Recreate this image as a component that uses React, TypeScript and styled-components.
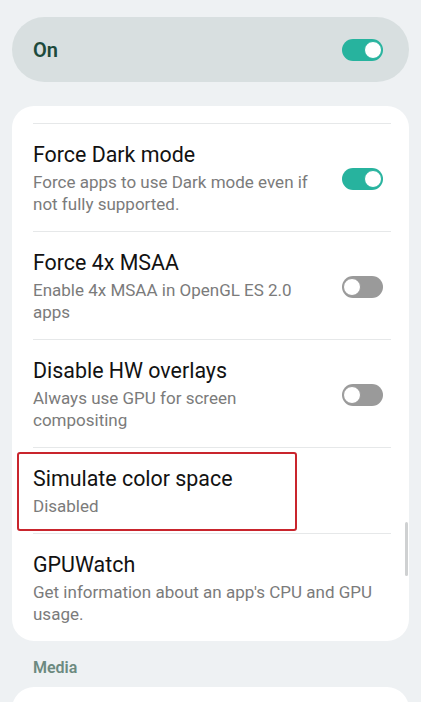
import React from "react";
import styled, { createGlobalStyle } from "styled-components";

const GlobalStyle = createGlobalStyle`
  html, body {
    margin: 0;
    padding: 0;
    background: #eef1f3;
  }
  body {
    font-family: Roboto, "Noto Sans", "Liberation Sans", sans-serif;
    -webkit-font-smoothing: antialiased;
  }
`;

interface IItem {
  title: string;
  summary?: string;
  toggle?: boolean;
  highlight?: boolean;
}

const items: IItem[] = [
  {
    title: "Force Dark mode",
    summary: "Force apps to use Dark mode even if not fully supported.",
    toggle: true,
  },
  {
    title: "Force 4x MSAA",
    summary: "Enable 4x MSAA in OpenGL ES 2.0 apps",
    toggle: false,
  },
  {
    title: "Disable HW overlays",
    summary: "Always use GPU for screen compositing",
    toggle: false,
  },
  { title: "Simulate color space", summary: "Disabled", highlight: true },
  {
    title: "GPUWatch",
    summary: "Get information about an app's CPU and GPU usage.",
  },
];

const Switch = ({ on }: { on: boolean }) => (
  <Track on={on}>
    <Knob on={on} />
  </Track>
);

const App = () => {
  return (
    <>
      <GlobalStyle />
      <Screen>
        <MasterBar>
          <MasterLabel>On</MasterLabel>
          <Switch on={true} />
        </MasterBar>

        <Card>
          <CutOff />
          {items.map((item) => (
            <React.Fragment key={item.title}>
              <Divider />
              <Row>
                {item.highlight && <Highlight />}
                <TextCol>
                  <Title>{item.title}</Title>
                  {item.summary && <Summary>{item.summary}</Summary>}
                </TextCol>
                {item.toggle !== undefined && <Switch on={item.toggle} />}
              </Row>
            </React.Fragment>
          ))}
          <ScrollThumb />
        </Card>

        <SectionLabel>Media</SectionLabel>
        <NextCard />
      </Screen>
    </>
  );
};

const Screen = styled.div`
  width: 421px;
  height: 702px;
  overflow: hidden;
  padding: 17px 12px 0;
  box-sizing: border-box;
  display: flex;
  flex-direction: column;
`;

const MasterBar = styled.div`
  height: 65px;
  flex-shrink: 0;
  border-radius: 33px;
  background: #d8dfe0;
  display: flex;
  align-items: center;
  justify-content: space-between;
  padding: 0 26px 0 21px;
`;

const MasterLabel = styled.span`
  font-size: 20px;
  font-weight: 600;
  color: #1d4a3c;
`;

const Track = styled.div<{ on: boolean }>`
  width: 41px;
  height: 22px;
  border-radius: 11px;
  flex-shrink: 0;
  box-sizing: border-box;
  background: ${(p) => (p.on ? "#27b39e" : "#9a9a9a")};
  display: flex;
  align-items: center;
  justify-content: ${(p) => (p.on ? "flex-end" : "flex-start")};
  padding: 0 2px;
`;

const Knob = styled.div<{ on: boolean }>`
  width: 18px;
  height: 18px;
  border-radius: 50%;
  background: #fff;
  box-sizing: border-box;
  border: 1.5px solid ${(p) => (p.on ? "#27b39e" : "#9a9a9a")};
  margin: ${(p) => (p.on ? "0 -1px 0 0" : "0 0 0 -1px")};
`;

const Card = styled.div`
  position: relative;
  margin-top: 24px;
  flex-shrink: 0;
  background: #ffffff;
  border-radius: 22px;
  padding: 0 18px 0 21px;
`;

const CutOff = styled.div`
  height: 17px;
`;

const Divider = styled.div`
  height: 1px;
  background: #e6e8e9;
`;

const Row = styled.div`
  position: relative;
  display: flex;
  align-items: center;
  padding: 19px 8px 16px 0;
  gap: 27px;
`;

const TextCol = styled.div`
  flex: 1;
  min-width: 0;
`;

const Title = styled.div`
  font-size: 21.4px;
  line-height: 24px;
  color: #121212;
`;

const Summary = styled.div`
  margin-top: 4px;
  font-size: 17px;
  line-height: 22px;
  color: #7b7b7b;
`;

const Highlight = styled.div`
  position: absolute;
  left: -16px;
  top: 4px;
  width: 280px;
  height: 79px;
  box-sizing: border-box;
  border: 2px solid #c9252d;
  border-radius: 3px;
  pointer-events: none;
`;

const ScrollThumb = styled.div`
  position: absolute;
  right: 1px;
  top: 416px;
  width: 3px;
  height: 54px;
  border-radius: 2px;
  background: #cfd1d2;
`;

const SectionLabel = styled.div`
  margin: 17px 0 0 21px;
  font-size: 16px;
  line-height: 20px;
  font-weight: 600;
  color: #6c8a80;
`;

const NextCard = styled.div`
  margin-top: 9px;
  height: 60px;
  flex-shrink: 0;
  background: #ffffff;
  border-radius: 22px 22px 0 0;
`;

export default App;
